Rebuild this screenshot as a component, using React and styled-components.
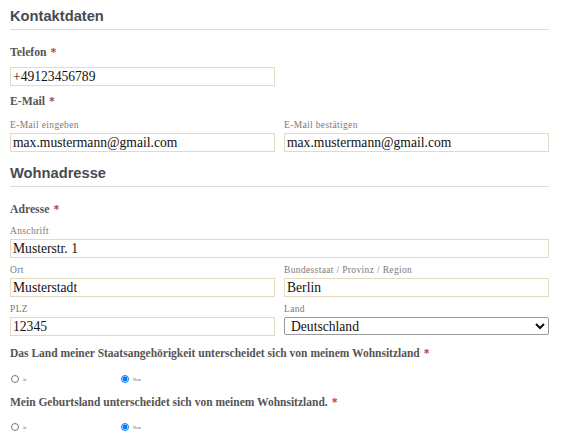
import React from "react";
import styled, { createGlobalStyle } from "styled-components";

const GlobalStyle = createGlobalStyle`
  body {
    margin: 0;
    background: #ffffff;
    font-family: "Liberation Serif", "Times New Roman", serif;
  }
`;

const Page = styled.div`
  width: 539px;
  padding: 6px 10px 0 10px;
`;

const SectionTitle = styled.h2`
  margin: ${(p) => p.$top || 0}px 0 0 0;
  padding-bottom: 3px;
  border-bottom: 1px solid #dcdcdc;
  font-family: "Liberation Sans", Arial, sans-serif;
  font-size: 14.7px;
  line-height: 20px;
  font-weight: bold;
  color: #464b51;
`;

const FieldLabel = styled.div`
  margin-top: ${(p) => p.$top}px;
  font-size: 11.7px;
  line-height: 16px;
  font-weight: bold;
  color: #555555;
`;

const Star = styled.span`
  color: #b5403f;
  margin-left: 4px;
`;

const SubLabel = styled.div`
  margin-top: ${(p) => p.$top || 0}px;
  margin-bottom: 2px;
  font-size: 9.5px;
  line-height: 12px;
  letter-spacing: 0.35px;
  color: #7a7a7a;
`;

const Row = styled.div`
  display: grid;
  grid-template-columns: 265px 265px;
  column-gap: 9px;
  margin-top: ${(p) => p.$top || 0}px;
`;

const Single = styled.div`
  width: ${(p) => (p.$full ? "539px" : "265px")};
  margin-top: ${(p) => p.$top || 0}px;
`;

const TextInput = styled.input`
  box-sizing: border-box;
  display: block;
  width: 100%;
  height: 19px;
  margin: 0;
  padding: 0 2px;
  border: 1px solid #e3dbc0;
  border-radius: 0;
  background: #ffffff;
  font-family: "Liberation Serif", "Times New Roman", serif;
  font-size: 13.6px;
  color: #111111;
  outline: none;
`;

const Select = styled.select`
  box-sizing: border-box;
  display: block;
  width: 100%;
  height: 18px;
  margin: 0;
  padding: 0 2px;
  border: 1px solid #9a9a9a;
  border-radius: 2px;
  background: #ffffff;
  font-family: "Liberation Serif", "Times New Roman", serif;
  font-size: 13.6px;
  color: #111111;
`;

const Question = styled.div`
  margin-top: ${(p) => p.$top}px;
  font-size: 11.5px;
  line-height: 16px;
  font-weight: bold;
  color: #555555;
`;

const RadioRow = styled.div`
  display: flex;
  align-items: center;
  margin-top: ${(p) => p.$top}px;
  height: 10px;
`;

const Option = styled.label`
  display: flex;
  align-items: center;
  gap: 4px;
  width: 109px;
  padding-left: 1px;
  font-size: 4px;
  color: #555555;
`;

const Radio = styled.input`
  width: 8px;
  height: 8px;
  margin: 0;
`;

const Column = ({ label, children }) => (
  <div>
    <SubLabel>{label}</SubLabel>
    {children}
  </div>
);

const YesNo = ({ name, top }) => (
  <RadioRow $top={top}>
    <Option>
      <Radio type="radio" name={name} value="ja" />
      Ja
    </Option>
    <Option>
      <Radio type="radio" name={name} value="nein" defaultChecked />
      Nein
    </Option>
  </RadioRow>
);

export default function App() {
  return (
    <Page>
      <GlobalStyle />
      <SectionTitle>Kontaktdaten</SectionTitle>

      <FieldLabel $top={15}>
        Telefon<Star>*</Star>
      </FieldLabel>
      <Single $top={6}>
        <TextInput defaultValue="+49123456789" />
      </Single>

      <FieldLabel $top={8}>
        E-Mail<Star>*</Star>
      </FieldLabel>
      <Row $top={9}>
        <Column label="E-Mail eingeben">
          <TextInput defaultValue="max.mustermann@gmail.com" />
        </Column>
        <Column label="E-Mail bestätigen">
          <TextInput defaultValue="max.mustermann@gmail.com" />
        </Column>
      </Row>

      <SectionTitle $top={11}>Wohnadresse</SectionTitle>

      <FieldLabel $top={15}>
        Adresse<Star>*</Star>
      </FieldLabel>
      <Single $full $top={7}>
        <SubLabel>Anschrift</SubLabel>
        <TextInput defaultValue="Musterstr. 1" />
      </Single>
      <Row $top={6}>
        <Column label="Ort">
          <TextInput defaultValue="Musterstadt" />
        </Column>
        <Column label="Bundesstaat / Provinz / Region">
          <TextInput defaultValue="Berlin" />
        </Column>
      </Row>
      <Row $top={6}>
        <Column label="PLZ">
          <TextInput defaultValue="12345" />
        </Column>
        <Column label="Land">
          <Select defaultValue="DE">
            <option value="DE">Deutschland</option>
            <option value="AT">Österreich</option>
            <option value="CH">Schweiz</option>
          </Select>
        </Column>
      </Row>

      <Question $top={9}>
        Das Land meiner Staatsangehörigkeit unterscheidet sich von meinem Wohnsitzland<Star>*</Star>
      </Question>
      <YesNo name="staat" top={13} />

      <Question $top={10}>
        Mein Geburtsland unterscheidet sich von meinem Wohnsitzland.<Star>*</Star>
      </Question>
      <YesNo name="geburt" top={12} />
    </Page>
  );
}
